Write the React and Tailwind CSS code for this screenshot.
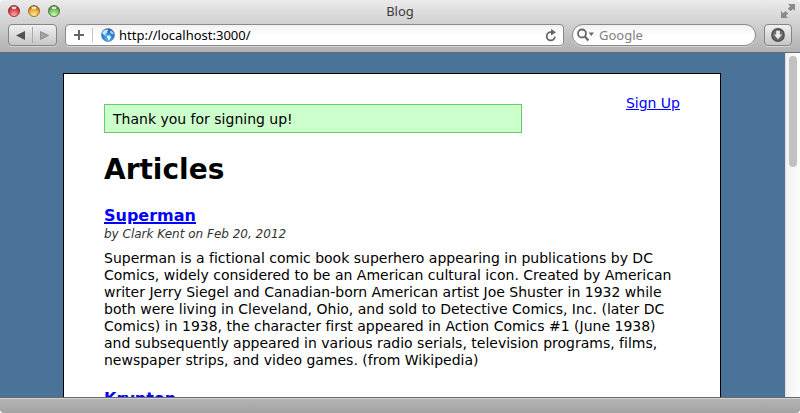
const articles = [
  {
    title: "Superman",
    byline: "by Clark Kent on Feb 20, 2012",
    body: "Superman is a fictional comic book superhero appearing in publications by DC Comics, widely considered to be an American cultural icon. Created by American writer Jerry Siegel and Canadian-born American artist Joe Shuster in 1932 while both were living in Cleveland, Ohio, and sold to Detective Comics, Inc. (later DC Comics) in 1938, the character first appeared in Action Comics #1 (June 1938) and subsequently appeared in various radio serials, television programs, films, newspaper strips, and video games. (from Wikipedia)",
  },
  { title: "Krypton" },
];

function TrafficLight({ label, name, rim, body, glow }) {
  return (
    <button type="button" aria-label={label} className="h-3 w-3">
      <svg width="12" height="12" viewBox="0 0 12 12" aria-hidden="true">
        <defs>
          <radialGradient id={name} cx="0.5" cy="0.88" r="0.75">
            <stop offset="0" stopColor={glow} />
            <stop offset="0.75" stopColor={body} />
            <stop offset="1" stopColor={rim} />
          </radialGradient>
        </defs>
        <circle cx="6" cy="6" r="5.5" fill={`url(#${name})`} stroke={rim} strokeWidth="0.9" />
        <ellipse cx="6" cy="2.8" rx="2.6" ry="1.4" fill="#fff" opacity="0.8" />
      </svg>
    </button>
  );
}

function GlobeIcon() {
  return (
    <svg width="14" height="14" viewBox="0 0 14 14" aria-hidden="true" className="shrink-0">
      <defs>
        <radialGradient id="globe" cx="0.5" cy="0.75" r="0.75">
          <stop offset="0" stopColor="#54bdf5" />
          <stop offset="0.6" stopColor="#2878cf" />
          <stop offset="1" stopColor="#1d4fa0" />
        </radialGradient>
      </defs>
      <circle cx="7" cy="7" r="6.6" fill="url(#globe)" stroke="#6d90b8" strokeWidth="0.7" />
      <path d="M1.4 4.4C2.6 2.2 4.6 1.2 6.6 1.4L7.4 2.6 6 3.6 6.4 4.8 4.8 5.4 4.4 6.4 5.8 7 5.2 7.8 3.4 7.2 1.6 6Z" fill="#cde6f8" />
      <path d="M6.4 7.4L8.4 7.4 10 8.6 9.4 10.2 8.2 12.4 7.2 12.4 7 10.4 5.8 9Z" fill="#e6f4fc" />
      <path d="M9.4 2.4L11.2 3.2 12.4 5 12.6 6.6 11.2 6 10 5.6 9.2 4.4Z" fill="#a8d2f2" />
    </svg>
  );
}

function TitleBar() {
  return (
    <div className="flex h-6 items-center px-2 pb-[2px]">
      <div className="flex gap-2">
        <TrafficLight label="Close" name="close" rim="#8f2f33" body="#dc3a40" glow="#ffb0a8" />
        <TrafficLight label="Minimize" name="minimize" rim="#97661f" body="#eda02c" glow="#fff0a0" />
        <TrafficLight label="Zoom" name="zoom" rim="#437438" body="#6cba56" glow="#d2ffb4" />
      </div>
      <div className="flex-1 text-center text-[13px] leading-4 text-[#3b3b3b]">Blog</div>
      <button type="button" aria-label="Full screen" className="h-4 w-[52px]">
        <svg width="16" height="16" viewBox="0 0 16 16" className="-mr-1 ml-auto" fill="#8a8a8a" aria-hidden="true">
          <path d="M8 1H15V8L12.9 5.9 10.4 8.2 7.9 5.7 10.2 3.2Z" />
          <path d="M1 8V15H8L5.8 12.8 8.1 10.5 5.6 8 3.2 10.2Z" />
        </svg>
      </button>
    </div>
  );
}

function Toolbar() {
  return (
    <div className="flex h-[22px] items-stretch px-2">
      <div className="flex w-[49px] items-center rounded-[4px] border border-[#858585] bg-linear-to-b from-[#f0f0f0] to-[#c6c6c6] shadow-[0_1px_0_rgba(255,255,255,0.4)]">
        <button type="button" aria-label="Back" className="flex h-full flex-1 items-center justify-center">
          <svg width="9" height="9" viewBox="0 0 9 9" aria-hidden="true">
            <path d="M0 4.5L9 0V9Z" fill="#505050" />
          </svg>
        </button>
        <span className="h-4 w-px bg-[#aaaaaa]" />
        <button type="button" aria-label="Forward" className="flex h-full flex-1 items-center justify-center">
          <svg width="9" height="9" viewBox="0 0 9 9" aria-hidden="true">
            <path d="M8.5 4.5L0.5 0.5V8.5Z" fill="#a2a2a2" stroke="#808080" strokeWidth="0.7" />
          </svg>
        </button>
      </div>

      <div className="ml-2 flex flex-1 items-center rounded-[4px] border border-[#8a8a8a] bg-linear-to-b from-[#f1f1f1] to-white to-50% pr-[6px] shadow-[0_1px_0_rgba(255,255,255,0.4)]">
        <button type="button" aria-label="Add bookmark" className="flex h-full w-[26px] items-center justify-center">
          <svg width="10" height="10" viewBox="0 0 10 10" fill="none" stroke="#666" strokeWidth="2" aria-hidden="true">
            <path d="M5 0V10M0 5H10" />
          </svg>
        </button>
        <span className="mr-2 h-[14px] w-px bg-[#c4c4c4]" />
        <GlobeIcon />
        <input
          type="text"
          aria-label="Address"
          defaultValue="http://localhost:3000/"
          className="ml-1 h-5 min-w-0 flex-1 bg-transparent p-0 text-[13px] leading-5 text-black outline-none"
        />
        <button type="button" aria-label="Reload" className="flex h-full items-center">
          <svg width="12" height="13" viewBox="0 0 12 13" aria-hidden="true">
            <path d="M6.4 3.2H5.8A4.1 4.1 0 1 0 9.9 7.6" fill="none" stroke="#666" strokeWidth="1.8" />
            <path d="M6 0L11 3.3 6 6.6Z" fill="#666" />
          </svg>
        </button>
      </div>

      <div className="ml-2 flex w-[184px] items-center rounded-full border border-[#8a8a8a] bg-linear-to-b from-[#f1f1f1] to-white to-50% px-1 shadow-[0_1px_0_rgba(255,255,255,0.4)]">
        <svg width="18" height="14" viewBox="0 0 18 14" aria-hidden="true" className="shrink-0">
          <circle cx="5" cy="5.5" r="4" fill="none" stroke="#666" strokeWidth="1.8" />
          <path d="M7.8 8.4L11.4 12.4" stroke="#666" strokeWidth="2.2" />
          <path d="M11.6 4.5H17L14.3 8Z" fill="#666" />
        </svg>
        <input
          type="text"
          aria-label="Search"
          placeholder="Google"
          className="ml-1 h-5 min-w-0 flex-1 bg-transparent p-0 text-[13px] leading-5 outline-none placeholder:text-[#808080]"
        />
      </div>

      <button
        type="button"
        aria-label="Downloads"
        className="ml-2 flex w-7 items-center justify-center rounded-[4px] border border-[#858585] bg-linear-to-b from-[#f0f0f0] to-[#c6c6c6] shadow-[0_1px_0_rgba(255,255,255,0.4)]"
      >
        <svg width="14" height="14" viewBox="0 0 14 14" aria-hidden="true" className="shrink-0">
          <circle cx="7" cy="7" r="6.9" fill="#4f4f4f" />
          <circle cx="7" cy="7" r="5.4" fill="#6a6a6a" />
          <path d="M5.2 2.8H8.8V6.6H11L7 11.2 3 6.6H5.2Z" fill="#ececec" />
        </svg>
      </button>
    </div>
  );
}

function Article({ title, byline, body }) {
  return (
    <article className="mb-5">
      <h2 className="text-base leading-5 font-bold">
        <a href="#article" className="text-[#0000ff] underline decoration-2">{title}</a>
      </h2>
      {byline && <p className="text-xs leading-4 text-[#333] italic">{byline}</p>}
      {body && <p className="mt-2 text-sm leading-[17px]">{body}</p>}
    </article>
  );
}

export default function App() {
  return (
    <div className="flex h-screen flex-col overflow-hidden bg-white">
      <header className="h-[53px] shrink-0 rounded-t-[4px] border-b border-[#6a6a6a] bg-linear-to-b from-[#ebebeb] to-[#b1b1b1] font-['Noto_Sans',sans-serif]">
        <TitleBar />
        <Toolbar />
      </header>

      <div className="flex min-h-0 flex-1">
        <main className="min-w-0 flex-1 overflow-hidden bg-[#4b7399] pt-5 pr-px font-['DejaVu_Sans',sans-serif] text-black [font-variant-ligatures:none]">
          <div className="mx-auto min-h-full w-full max-w-[658px] border border-black bg-white px-10 pt-[21px] pb-5">
            <div className="flex items-start justify-between text-sm leading-[17px]">
              <p role="status" className="mt-[9px] w-[418px] border border-[#66cc66] bg-[#ccffcc] px-2 pt-[6px] pb-1">
                Thank you for signing up!
              </p>
              <a href="#signup" className="text-[#0000ff] underline">Sign Up</a>
            </div>
            <h1 className="mt-5 mb-[19px] text-[28px] leading-[34px] font-bold">Articles</h1>
            {articles.map((article) => (
              <Article key={article.title} {...article} />
            ))}
          </div>
        </main>
        <div className="w-[15px] shrink-0 border-l border-[#dedede] bg-linear-to-r from-[#f2f2f2] to-[#fdfdfd] pt-[3px]">
          <div className="ml-[3px] h-[111px] w-2 rounded-full bg-[#c1c1c1]" />
        </div>
      </div>

      <footer className="h-4 shrink-0 rounded-b-[4px] border-t border-[#6a6a6a] bg-linear-to-b from-[#b5b5b5] to-[#a3a3a3] shadow-[inset_0_1px_0_#d0d0d0]" />
    </div>
  );
}
